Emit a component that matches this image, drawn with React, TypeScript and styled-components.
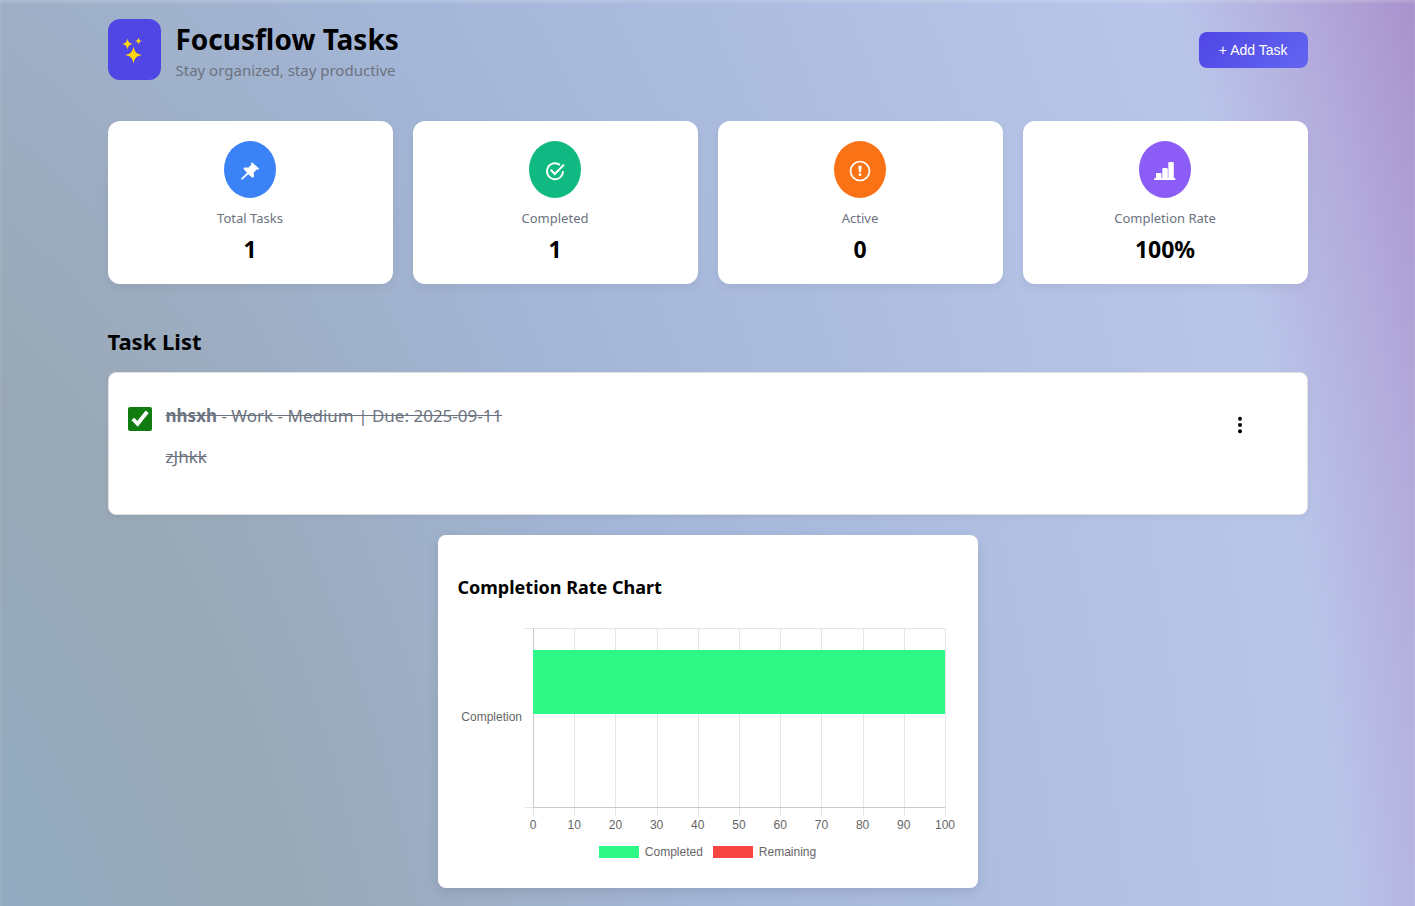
import React, { useState } from "react";
import styled, { createGlobalStyle } from "styled-components";

const GlobalStyle = createGlobalStyle`
  * { box-sizing: border-box; }
  html { min-height: 100%; }
  body {
    margin: 0;
    min-height: 100vh;
    font-family: "Noto Sans", "Open Sans", sans-serif;
    color: #000;
    box-shadow: inset 0 2px 3px rgba(255, 255, 255, 0.2);
    background: radial-gradient(134% 354% at -21% 143%,
      #93abc0 0%, #93abc0 21%, #98a8b5 32%, #a4b6d8 54%, #b9c6ea 87%, #b5b1df 92%, #a78dc9 100%);
  }
`;

const Page = styled.main`
  max-width: 1240px;
  margin: 0 auto;
  padding: 19px 20px 18px;
`;

const Header = styled.header`
  display: flex;
  align-items: center;
  justify-content: space-between;
  margin-bottom: 41px;
`;

const Brand = styled.div`
  display: flex;
  align-items: center;
  gap: 15px;
`;

const Logo = styled.div`
  width: 53px;
  height: 61px;
  border-radius: 12px;
  background: #4f46e5;
  display: flex;
  align-items: center;
  justify-content: center;
`;

const Title = styled.h1`
  margin: 0;
  font-size: 28px;
  line-height: 40px;
  font-weight: 700;
`;

const Subtitle = styled.p`
  margin: 2px 0 0;
  font-size: 15px;
  line-height: 19px;
  color: #6b7280;
`;

const AddButton = styled.button`
  height: 36px;
  padding: 0 20px;
  border: 0;
  border-radius: 8px;
  color: #fff;
  font: 14px "Liberation Sans", Arial, sans-serif;
  background: linear-gradient(135deg, #4f46e5, #6366f1);
  cursor: pointer;
`;

const Stats = styled.section`
  display: grid;
  grid-template-columns: repeat(4, 1fr);
  gap: 20px;
  margin-bottom: 41px;
`;

const StatCard = styled.article`
  display: flex;
  flex-direction: column;
  align-items: center;
  padding: 20px;
  background: #fff;
  border-radius: 12px;
  box-shadow: 0 4px 10px rgba(0, 0, 0, 0.05);
`;

const StatIcon = styled.div<{ $color: string }>`
  width: 52px;
  height: 57px;
  padding-top: 2px;
  border-radius: 50%;
  display: flex;
  align-items: center;
  justify-content: center;
  background: ${(p) => p.$color};
`;

const StatLabel = styled.span`
  margin-top: 10px;
  font-size: 13px;
  line-height: 20px;
  color: #6b7280;
`;

const StatValue = styled.strong`
  margin-top: 7px;
  font-size: 23px;
  line-height: 29px;
`;

const ListTitle = styled.h2`
  margin: 0 0 15px;
  font-size: 22px;
  line-height: 32px;
`;

const TaskCard = styled.article`
  display: flex;
  align-items: flex-start;
  min-height: 143px;
  padding: 27px 19px;
  background: #fff;
  border: 1px solid #e0e0e0;
  border-radius: 8px;
  box-shadow: 0 2px 5px rgba(0, 0, 0, 0.05);
`;

const Check = styled.input`
  width: 24px;
  height: 24px;
  margin: 7px 14px 0 0;
  accent-color: #107c10;
`;

const TaskText = styled.label<{ $done: boolean }>`
  flex: 1;
  display: flex;
  flex-direction: column;
  gap: 9px;
  font-size: 17px;
  line-height: 32px;
  color: #6b7280;
  & > span {
    align-self: flex-start;
    text-decoration: ${(p) => (p.$done ? "line-through" : "none")};
  }
`;

const MenuButton = styled.button`
  width: 24px;
  height: 24px;
  margin: 13px 36px 0 0;
  padding: 0;
  border: 0;
  background: none;
  cursor: pointer;
`;

const ChartCard = styled.section`
  max-width: 540px;
  margin: 20px auto 0;
  padding: 40px 20px 29px;
  background: #fff;
  border-radius: 8px;
  box-shadow: 0 4px 12px rgba(0, 0, 0, 0.1);
`;

const ChartTitle = styled.h3`
  margin: 0 0 18px;
  font-size: 18px;
  line-height: 25px;
`;

const Plot = styled.svg`
  display: block;
  width: 100%;
  font: 12px "Liberation Sans", Arial, sans-serif;
`;

const Legend = styled.ul`
  display: flex;
  justify-content: center;
  gap: 10px;
  margin: 7px 0 0;
  padding: 0;
  list-style: none;
  font: 12px/14px "Liberation Sans", Arial, sans-serif;
  color: #666;
`;

const LegendItem = styled.li<{ $color: string }>`
  display: flex;
  align-items: center;
  gap: 6px;
  &::before {
    content: "";
    width: 40px;
    height: 12px;
    background: ${(p) => p.$color};
  }
`;

const PinIcon = () => (
  <svg width="20" height="20" viewBox="0 0 20 20" fill="#fff">
    <path d="M12 1.3 19 7.6 17.900 8.800 16.600 8.500 13.600 11.800 14 15.400 12.600 17 8.300 13.200 2.400 18.600 1 18.600 1.200 17.400 7 11.800 3.300 7.800 4.600 6.400 8.500 6.500 11.500 3.600 11 2.300Z" />
  </svg>
);

const DoneIcon = () => (
  <svg width="20" height="20" viewBox="0 0 20 20" fill="none" stroke="#fff" strokeWidth="1.8">
    <path d="M15 4A8 8 0 1 0 18 10" />
    <path d="m5.8 8.8 4 4.2L19 3.6" strokeWidth="2" />
  </svg>
);

const AlertIcon = () => (
  <svg width="22" height="22" viewBox="0 0 22 22">
    <circle cx="11" cy="11" r="9.5" fill="none" stroke="#fff" strokeWidth="1.7" />
    <path d="M9.3 5.8h3.4l-.7 6.5h-2z" fill="#fff" />
    <circle cx="11" cy="14.7" r="1.4" fill="#fff" />
  </svg>
);

const BarsIcon = () => (
  <svg width="22" height="20" viewBox="0 0 22 20" fill="#fff">
    <path d="M1 17h1v-4q0-1 1-1h3.500q1 0 1 1v4h.8V8q0-1 1-1h3.500q1 0 1 1v9h.5V2q0-1 1-1h3.500q1 0 1 1v15h.700q1 0 1 1t-1 1H1q-1 0-1-1t1-1Z" />
  </svg>
);

const SparkleDrawing = styled.svg`
  overflow: visible;
`;

const Sparkles = () => (
  <SparkleDrawing width="22" height="28" viewBox="0 0 22 28" fill="#ffd60a">
    <path d="M10.5 10.5C11.8 16.400 13.400 18 19 19 13.400 20 11.800 21.700 10.500 27.500 9.200 21.700 7.600 20 2 19 7.600 18 9.200 16.400 10.500 10.500Z" />
    <path d="M4.500 2.500C5.300 6.200 6.300 7.300 10 8 6.300 8.700 5.300 9.800 4.500 13.500 3.700 9.800 2.700 8.700-1 8 2.700 7.300 3.700 6.200 4.500 2.500Z" />
    <path d="M15.500 1.500C16 4.100 16.800 4.600 19.500 5 16.800 5.400 16 6 15.500 8.500 15 6 14.200 5.400 11.500 5 14.200 4.600 15 4.100 15.500 1.500Z" />
  </SparkleDrawing>
);

const stats = [
  { label: "Total Tasks", value: "1", color: "#3b82f6", icon: <PinIcon /> },
  { label: "Completed", value: "1", color: "#10b981", icon: <DoneIcon /> },
  { label: "Active", value: "0", color: "#f97316", icon: <AlertIcon /> },
  { label: "Completion Rate", value: "100%", color: "#8b5cf6", icon: <BarsIcon /> },
];

const ticks = Array.from({ length: 11 }, (_, i) => i * 10);

function CompletionPlot({ rate }: { rate: number }) {
  const x = (v: number) => 75 + v * 4.12;
  return (
    <Plot viewBox="0 0 500 220" role="img" aria-label="Completion rate">
      <path d="M67 10.5H487M67 189.5H75" stroke="#e5e5e5" />
      {ticks.map((t) => (
        <g key={t}>
          <path d={`M${Math.round(x(t)) + 0.5} 10V198`} stroke="#e5e5e5" />
          <text x={x(t)} y="211" fill="#666" textAnchor="middle">{t}</text>
        </g>
      ))}
      <path d="M75 189.5H487M75.5 10V190" stroke="#c9c9c9" fill="none" />
      <rect x="75" y="32" width={rate * 4.12} height="64" fill="#2ef986" />
      <text x="64" y="103" fill="#666" textAnchor="end">Completion</text>
    </Plot>
  );
}

export default function App() {
  const [done, setDone] = useState(true);
  return (
    <>
      <GlobalStyle />
      <Page>
        <Header>
          <Brand>
            <Logo><Sparkles /></Logo>
            <div>
              <Title>Focusflow Tasks</Title>
              <Subtitle>Stay organized, stay productive</Subtitle>
            </div>
          </Brand>
          <AddButton type="button">+ Add Task</AddButton>
        </Header>
        <Stats>
          {stats.map((s) => (
            <StatCard key={s.label}>
              <StatIcon $color={s.color}>{s.icon}</StatIcon>
              <StatLabel>{s.label}</StatLabel>
              <StatValue>{s.value}</StatValue>
            </StatCard>
          ))}
        </Stats>
        <ListTitle>Task List</ListTitle>
        <TaskCard>
          <Check id="task-1" type="checkbox" checked={done} onChange={() => setDone(!done)} />
          <TaskText htmlFor="task-1" $done={done}>
            <span><b>nhsxh</b> - Work - Medium | Due: 2025-09-11</span>
            <span>zJhkk</span>
          </TaskText>
          <MenuButton type="button" aria-label="Task options">
            <svg width="24" height="24" viewBox="0 0 24 24">
              <circle cx="12" cy="5.7" r="2" />
              <circle cx="12" cy="12" r="2" />
              <circle cx="12" cy="18.2" r="2" />
            </svg>
          </MenuButton>
        </TaskCard>
        <ChartCard>
          <ChartTitle>Completion Rate Chart</ChartTitle>
          <CompletionPlot rate={100} />
          <Legend>
            <LegendItem $color="#2ef986">Completed</LegendItem>
            <LegendItem $color="#fa4545">Remaining</LegendItem>
          </Legend>
        </ChartCard>
      </Page>
    </>
  );
}
